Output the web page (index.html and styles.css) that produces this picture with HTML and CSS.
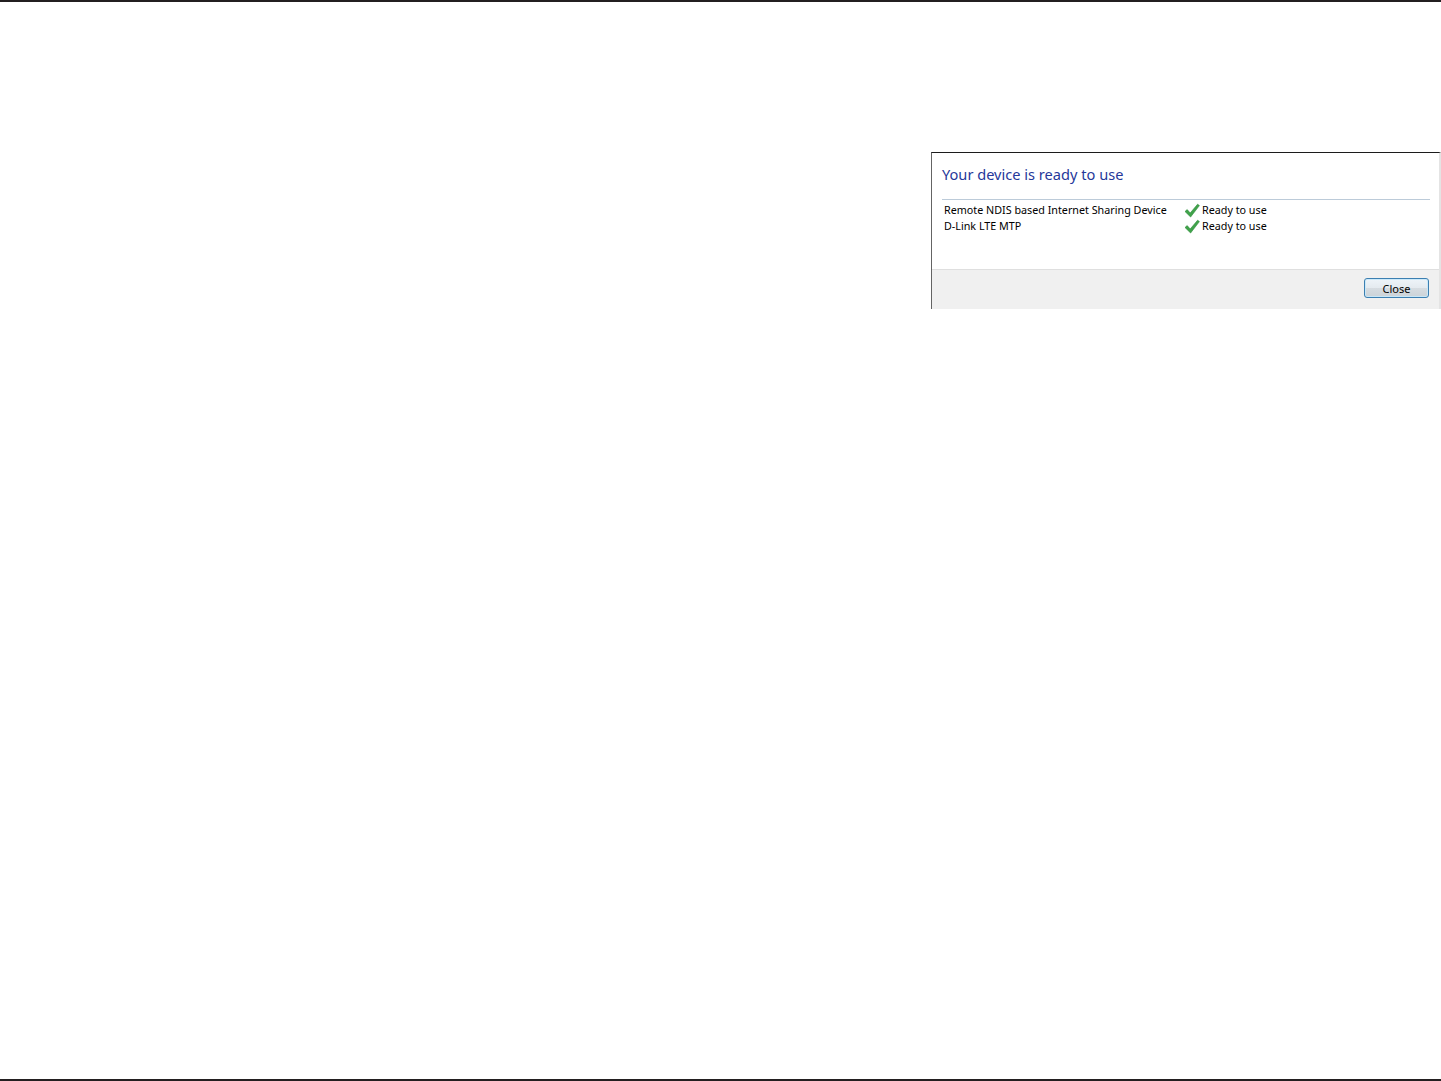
FILE: index.html
```html
<!DOCTYPE html>
<html>
<head>
<meta charset="utf-8">
<link rel="stylesheet" href="styles.css">
</head>
<body>
<div class="page">
  <div class="dialog">
    <div class="content">
      <h1 class="title">Your device is ready to use</h1>
      <div class="list">
        <div class="row">
          <span class="name">Remote NDIS based Internet Sharing Device</span>
          <span class="status"><svg class="check" viewBox="0 0 16 16" width="16" height="16"><path d="M1 9.5 L3.2 7.6 L6.2 11 L13.6 2.2 L15.4 3.6 L6.6 15 Z" fill="#3fa34a" stroke="#2c8a37" stroke-width="0.6" stroke-linejoin="round"/></svg>Ready to use</span>
        </div>
        <div class="row">
          <span class="name">D-Link LTE MTP</span>
          <span class="status"><svg class="check" viewBox="0 0 16 16" width="16" height="16"><path d="M1 9.5 L3.2 7.6 L6.2 11 L13.6 2.2 L15.4 3.6 L6.6 15 Z" fill="#3fa34a" stroke="#2c8a37" stroke-width="0.6" stroke-linejoin="round"/></svg>Ready to use</span>
        </div>
      </div>
    </div>
    <div class="footer">
      <button class="btn">Close</button>
    </div>
  </div>
</div>
</body>
</html>
```
FILE: styles.css
```css
html, body {
  margin: 0;
  padding: 0;
  background: #ffffff;
}
.page {
  box-sizing: border-box;
  height: 1081px;
  border-top: 2px solid #231f20;
  border-bottom: 2px solid #231f20;
  display: flex;
  flex-direction: column;
  align-items: flex-start;
  font-family: "Noto Sans", "Open Sans", sans-serif;
}
.dialog {
  box-sizing: border-box;
  margin-top: 150px;
  margin-left: 931px;
  width: 510px;
  height: 157px;
  border-top: 1px solid #1c1c1c;
  border-left: 1px solid #646464;
  border-right: 2px solid #e4e4e4;
  display: flex;
  flex-direction: column;
  background: #ffffff;
}
.content {
  flex: 1;
  padding: 0 9px 0 10px;
}
.title {
  margin: 10px 0 0 0;
  font-size: 14.6px;
  font-weight: normal;
  line-height: 22px;
  color: #26389a;
  padding-bottom: 14px;
  border-bottom: 1px solid #bccbd9;
}
.list {
  margin-top: 2px;
  padding-left: 2px;
}
.row {
  display: flex;
  height: 16px;
  align-items: center;
  font-size: 10.75px;
  color: #000000;
}
.name {
  width: 240px;
  white-space: nowrap;
}
.status {
  display: flex;
  align-items: center;
}
.check {
  margin-right: 2px;
}
.footer {
  flex: none;
  box-sizing: border-box;
  height: 40px;
  background: #f0f0f0;
  border-top: 1px solid #dfdfdf;
  display: flex;
  justify-content: flex-end;
  align-items: flex-start;
  padding-right: 10px;
}
.btn {
  margin-top: 8px;
  width: 65px;
  height: 20px;
  padding: 0;
  border: 1px solid #3c7fb1;
  border-radius: 3px;
  background: linear-gradient(#eef4f9 0%, #e4eaef 50%, #d6dce1 51%, #ccd3d8 100%);
  box-shadow: inset 0 0 0 1px rgba(200,232,250,0.9);
  font-family: "Noto Sans", "Open Sans", sans-serif;
  font-size: 11px;
  color: #000000;
  line-height: 17px;
}
```
